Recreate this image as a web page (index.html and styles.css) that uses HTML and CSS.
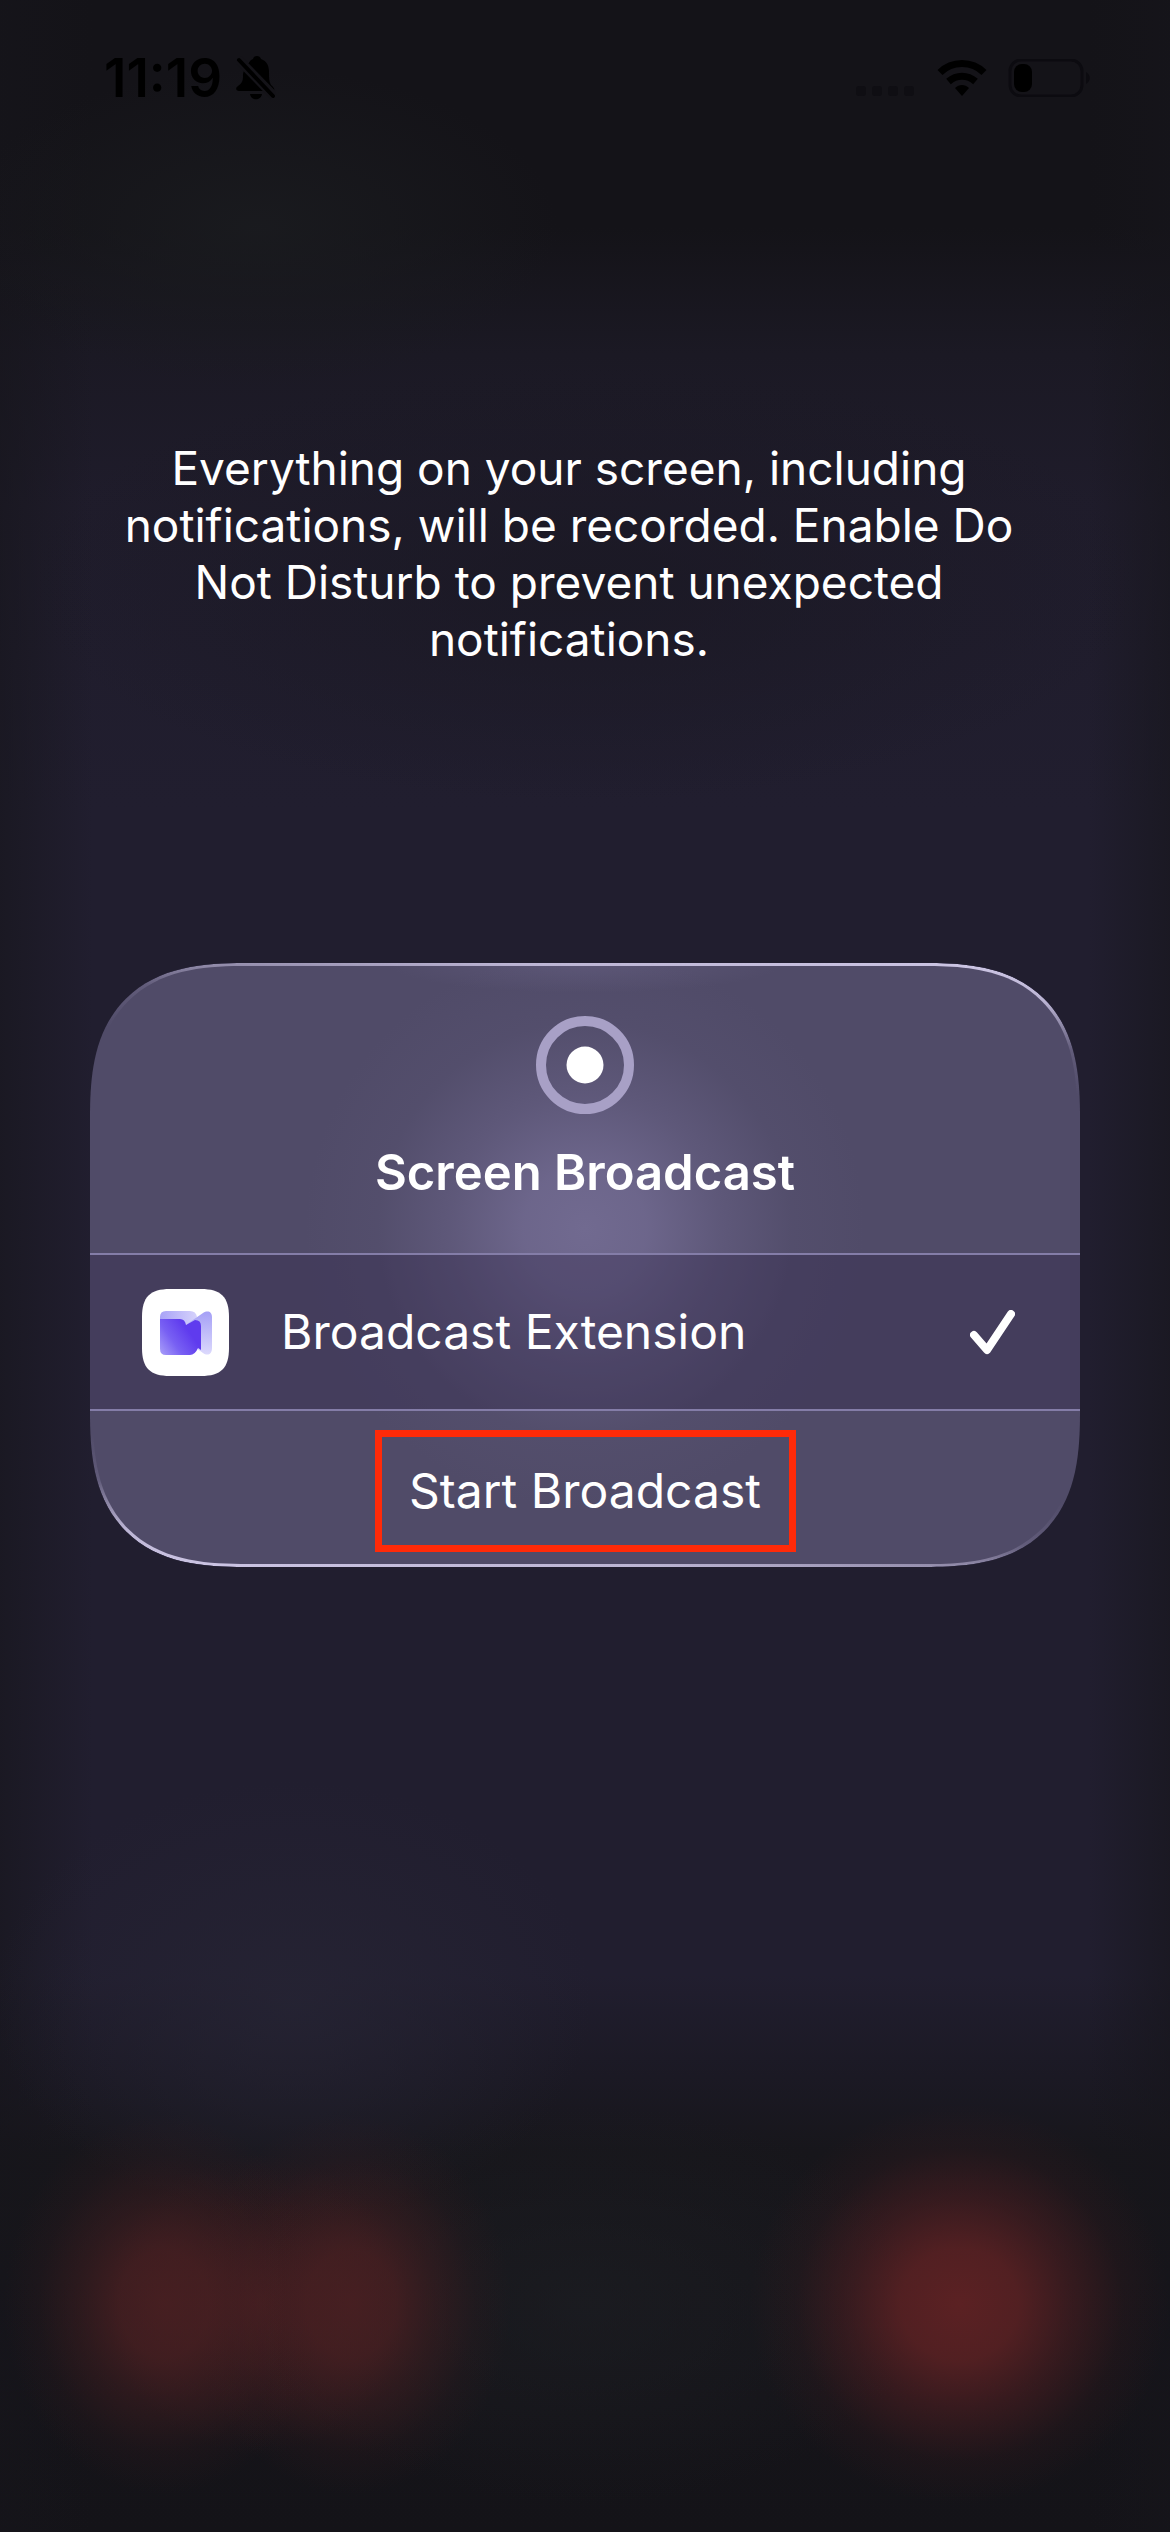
FILE: index.html
```html
<!DOCTYPE html>
<html lang="en">
<head>
  <meta charset="utf-8">
  <meta name="viewport" content="width=device-width, initial-scale=1">
  <title>Screen Broadcast</title>
  <link rel="stylesheet" href="styles.css">
</head>
<body>
  <header class="status-bar">
    <div class="status-left">
      <time class="clock">11:19</time>
      <svg class="bell" viewBox="0 0 40 44" role="img" aria-label="Silent mode">
        <path d="M12 9C13 5 16 3 17 3c1-4 7-4 8 0 6 2 8 7 8 13v9L12 7zM9 13l22 22H3c-3 0-4-3-1-5 5-3 5-7 5-11 0-3 1-4 2-6zM14 38h12c-1 7-11 7-12 0z"/>
        <path d="M8 10l24 24 6 1c1-3-1-4-3-6-2-3-2-7-2-13l-6-9-12-1z"/>
        <path class="bell-gap" d="M2 3l36 37"/>
        <path class="bell-slash" d="M3 4l34 36"/>
      </svg>
    </div>
    <div class="status-right">
      <svg class="signal" viewBox="0 0 60 38" role="img" aria-label="No signal">
        <rect x="0" y="27" width="10" height="10" rx="3"/>
        <rect x="16" y="27" width="10" height="10" rx="3"/>
        <rect x="32" y="27" width="10" height="10" rx="3"/>
        <rect x="48" y="27" width="10" height="10" rx="3"/>
      </svg>
      <svg class="wifi" viewBox="0 0 50 38" role="img" aria-label="Wi-Fi">
        <path class="wifi-arc" d="M3 13.500C15 1.500 35 1.500 47 13.500M11.500 22.500c8-7 19-7 27 0"/>
        <path d="M18 29c4-4 10-4 14 0l-7 8z"/>
      </svg>
      <svg class="battery" viewBox="0 0 84 38" role="img" aria-label="Battery low">
        <rect class="battery-shell" x="2" y="1" width="72" height="36" rx="11"/>
        <rect x="6" y="5" width="18" height="28" rx="8"/>
        <path class="battery-cap" d="M78 13c5 3 5 9 0 12z"/>
      </svg>
    </div>
  </header>

  <main class="sheet">
    <p class="notice">Everything on your screen, including notifications, will be recorded. Enable Do Not Disturb to prevent unexpected notifications.</p>

    <section class="card" aria-labelledby="card-title">
      <div class="card-header">
        <svg class="record" viewBox="0 0 98 98" aria-hidden="true">
          <circle class="record-ring" cx="49" cy="49" r="44"/>
          <circle class="record-dot" cx="49" cy="49" r="18.500"/>
        </svg>
        <h1 class="card-title" id="card-title">Screen Broadcast</h1>
      </div>

      <label class="option">
        <input class="option-input" type="radio" name="destination" checked>
        <svg class="app-icon" viewBox="0 0 87 87" aria-hidden="true">
          <defs>
            <linearGradient id="back" x1="0" y1="0" x2="1" y2="0">
              <stop offset="0" stop-color="#a9a3f7"/>
              <stop offset="1" stop-color="#d5d2fb"/>
            </linearGradient>
            <linearGradient id="wing" x1="0" y1="0" x2="0" y2="1">
              <stop offset="0" stop-color="#a5a0f6"/>
              <stop offset="1" stop-color="#dcd9fc"/>
            </linearGradient>
            <linearGradient id="front" x1="0" y1="1" x2="0.800" y2="0.500">
              <stop offset="0" stop-color="#aaa0f9"/>
              <stop offset="0.500" stop-color="#7860f3"/>
              <stop offset="1" stop-color="#5f3bee"/>
            </linearGradient>
          </defs>
          <path fill="#fff" d="M28 0h31c20 0 28 8 28 28v31c0 20-8 28-28 28H28C8 87 0 79 0 59V28C0 8 8 0 28 0z"/>
          <path fill="url(#back)" d="M24 22h24q6 0 7 6l-8 14H18V28q0-6 6-6z"/>
          <path fill="url(#wing)" d="M45 35l16-11c5-3 9-1 9 4v31c0 7-5 8-9 5l-7-5z"/>
          <path fill="url(#front)" d="M18 30h20q5 0 6 6l9-5q6 0 6 6v24l-3-2q-3 7-8 7H24q-6 0-6-6z"/>
        </svg>
        <span class="option-name">Broadcast Extension</span>
        <svg class="check" viewBox="0 0 45 45" aria-hidden="true">
          <path d="M4 25l13 15L41 4"/>
        </svg>
      </label>

      <div class="card-action">
        <button class="start" type="button">Start Broadcast</button>
      </div>
    </section>
  </main>
</body>
</html>
```
FILE: styles.css
```css
* {
  box-sizing: border-box;
}

body {
  margin: 0;
  min-height: 100vh;
  color: #fff;
  font-family: Inter, "Liberation Sans", sans-serif;
  background:
    radial-gradient(ellipse 210px 200px at 82% 91%, #5b2123 0%, rgba(90, 33, 35, 0.88) 28%, rgba(88, 32, 35, 0.5) 52%, rgba(80, 30, 33, 0.15) 78%, transparent 100%),
    radial-gradient(ellipse 160px 190px at 14% 91%, rgba(76, 32, 34, 0.85) 0%, rgba(76, 32, 34, 0.75) 28%, rgba(76, 32, 34, 0.42) 52%, rgba(70, 30, 33, 0.14) 78%, transparent 100%),
    radial-gradient(ellipse 160px 190px at 30% 91%, rgba(76, 32, 34, 0.85) 0%, rgba(76, 32, 34, 0.75) 28%, rgba(76, 32, 34, 0.42) 52%, rgba(70, 30, 33, 0.14) 78%, transparent 100%),
    radial-gradient(ellipse 150px 150px at 22% 91%, rgba(70, 30, 33, 0.7) 0%, rgba(70, 30, 33, 0.3) 50%, transparent 100%),
    radial-gradient(ellipse 340px 200px at 50% 91%, rgba(29, 31, 36, 0.6), transparent),
    radial-gradient(ellipse 300px 220px at 25% 79%, rgba(38, 36, 52, 0.8), transparent),
    radial-gradient(ellipse 300px 160px at 22% 9%, rgba(26, 27, 31, 0.9), transparent),
    radial-gradient(ellipse 560px 220px at 50% 23%, rgba(26, 24, 35, 0.8), transparent),
    linear-gradient(90deg, rgba(22, 21, 27, 0.6), transparent 8%, transparent 93%, rgba(22, 21, 27, 0.6)),
    linear-gradient(#141318 0%, #141318 9%, #1b1924 14%, #1f1c2b 20%, #211e2f 32%, #211e2f 78%, #1b1924 82%, #17161b 85%, #141318 100%);
}

.status-bar {
  display: flex;
  justify-content: space-between;
  height: 156px;
  padding: 56px 78px 0 104px;
}

.status-left,
.status-right {
  display: flex;
  align-items: flex-start;
}

.status-left {
  gap: 14px;
}

.clock {
  color: #000;
  font-size: 53px;
  font-weight: 600;
  line-height: 44px;
}

.bell {
  width: 40px;
  height: 44px;
}

.bell-gap,
.bell-slash {
  fill: none;
  stroke: #141318;
  stroke-width: 9;
}

.bell-slash {
  stroke: #000;
  stroke-width: 4;
  stroke-linecap: round;
}

.status-right {
  gap: 21px;
  padding-top: 3px;
}

.signal {
  width: 60px;
  height: 38px;
  fill: #0f0e13;
}

.wifi {
  width: 50px;
  height: 38px;
}

.wifi-arc {
  fill: none;
  stroke: #000;
  stroke-width: 7;
}

.battery {
  width: 84px;
  height: 38px;
}

.battery-shell {
  fill: none;
  stroke: #0c0b10;
  stroke-width: 3;
}

.battery-cap {
  fill: #0c0b10;
}

.sheet {
  padding: 284px 90px 0;
}

.notice {
  max-width: 940px;
  margin: 0 auto;
  padding-right: 32px;
  font-size: 46px;
  line-height: 57px;
  text-align: center;
}

.card {
  position: relative;
  margin-top: 295px;
  overflow: hidden;
  border-radius: 120px;
  background:
    radial-gradient(ellipse 200px 30px at 50% 0, rgba(115, 108, 146, 0.35), transparent),
    radial-gradient(circle 280px at 50% 266px, #716a90 0%, rgba(111, 104, 142, 0.92) 22%, rgba(106, 99, 136, 0.55) 48%, rgba(96, 90, 124, 0.2) 74%, transparent 100%),
    #504b68;
}

/* Light catching the top and bottom rim of the glass. */
.card::after {
  content: "";
  position: absolute;
  inset: 0;
  padding: 3px;
  border-radius: inherit;
  background: linear-gradient(184deg, #d0c9e8 0%, #bcb5d4 6%, rgba(140, 133, 166, 0.3) 13%, transparent 20%, transparent 80%, rgba(140, 133, 166, 0.3) 87%, #bcb5d4 94%, #d0c9e8 100%);
  mask: linear-gradient(#000 0 0) content-box exclude, linear-gradient(#000 0 0);
  pointer-events: none;
}

@supports (corner-shape: superellipse(1.4)) {
  .card,
  .card::after {
    border-radius: 155px;
    corner-shape: superellipse(1.4);
  }
}

.card-header {
  display: flex;
  flex-direction: column;
  align-items: center;
  gap: 29px;
  height: 290px;
  padding-top: 53px;
}

.record {
  width: 98px;
  height: 98px;
}

.record-ring {
  fill: none;
  stroke: #a8a0c6;
  stroke-width: 10;
}

.record-dot {
  fill: #fff;
}

.card-title {
  margin: 0;
  font-size: 49px;
  font-weight: 600;
  line-height: 60px;
}

.option {
  display: flex;
  align-items: center;
  height: 158px;
  padding: 0 65px 0 52px;
  border-top: 2px solid #847da8;
  border-bottom: 2px solid #847da8;
  background: rgba(50, 41, 76, 0.4);
  font-size: 48px;
  line-height: 60px;
}

.option-input {
  position: absolute;
  width: 1px;
  height: 1px;
  margin: 0;
  opacity: 0;
}

.app-icon {
  width: 87px;
  height: 87px;
}

.option-name {
  flex: 1;
  margin-left: 52px;
}

.check {
  width: 45px;
  height: 45px;
  fill: none;
  stroke: #fff;
  stroke-width: 8;
  stroke-linecap: round;
  stroke-linejoin: round;
}

.card-action {
  display: flex;
  justify-content: center;
  padding: 19px 0 15px;
}

.start {
  width: 421px;
  height: 122px;
  padding: 0;
  border: 7px solid #ff2a08;
  background: none;
  color: inherit;
  font: inherit;
  font-size: 48px;
  line-height: 60px;
  white-space: nowrap;
}
```
